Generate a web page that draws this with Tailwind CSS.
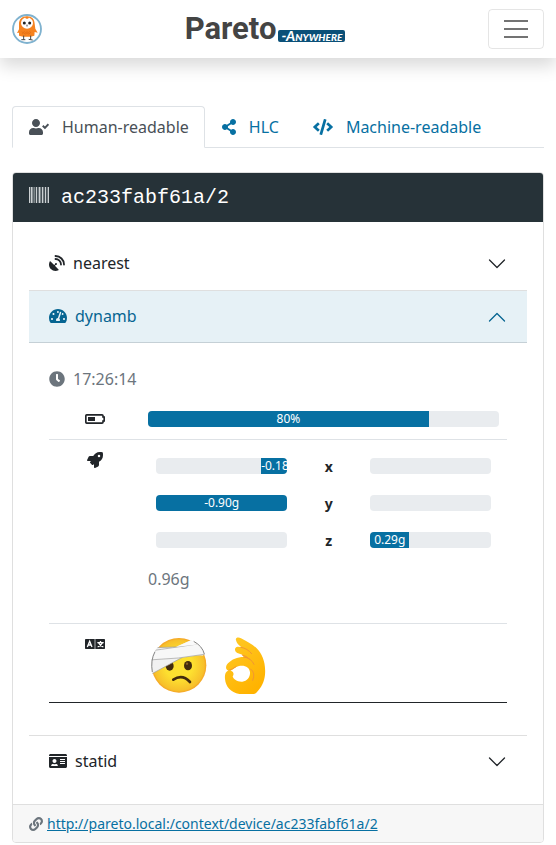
<!DOCTYPE html>
<html lang="en">
<head>
<meta charset="utf-8">
<meta name="viewport" content="width=device-width, initial-scale=1">
<title>Pareto Anywhere</title>
<script src="https://cdn.jsdelivr.net/npm/@tailwindcss/browser@4"></script>
</head>
<body class="bg-white font-['Noto_Sans',sans-serif] text-base leading-6 text-[#212529]">
<header class="flex items-center justify-between bg-white px-3 py-[9px] shadow-[0_8px_16px_rgba(0,0,0,0.15)]">
  <a href="#" aria-label="Home">
    <svg class="size-[30px]" viewBox="0 0 90 90" aria-hidden="true">
      <circle cx="45" cy="45" r="42" fill="#fff" stroke="#7fb2cf" stroke-width="5.500"/>
      <path d="M45 7C29 7 21 17 21 30L21 46L15 57L21 56L21 65Q45 72 67 65L68 54L77 56L70 44L68 29C67 16 60 7 45 7Z" fill="#f5821f"/>
      <ellipse cx="45" cy="27" rx="18" ry="17" fill="#fff"/>
      <path d="M38 11Q45 6 52 11L45 15Z" fill="#f5821f"/>
      <circle cx="37" cy="27" r="4.500" fill="#222"/><circle cx="53" cy="27" r="4.500" fill="#222"/>
      <path d="M42 32L48 32L45 40Z" fill="#777"/>
      <path d="M29 53l4 3 4-3 4 3 4-3 4 3 4-3 4 3M30 60l5-3 5 3 5-3 5 3 5-3" fill="none" stroke="#d9650f" stroke-width="1.500"/>
      <path d="M35 65V77M28 77H40M56 65V76M50 76L62 78" fill="none" stroke="#444" stroke-width="3"/>
    </svg>
  </a>
  <a href="#" class="flex items-end">
    <span class="font-['Roboto',sans-serif] text-[31px] leading-[30px] font-bold text-[#444]">Pareto</span>
    <span class="ml-[2px] mb-[2px] rounded-[2px] bg-[#0b5078] px-[3px] font-['Lato',sans-serif] text-[14px] leading-[12px] font-black text-white italic [font-variant-caps:small-caps]">-Anywhere</span>
  </a>
  <button type="button" aria-label="Toggle navigation" class="flex h-10 w-14 items-center justify-center rounded border border-black/10">
    <svg class="size-[30px]" viewBox="0 0 30 30" fill="none" stroke="#737373" stroke-width="2" aria-hidden="true"><path d="M3 7H27M3 15H27M3 23H27"/></svg>
  </button>
</header>

<main class="px-3 pt-12">
  <nav class="flex border-b border-[#dee2e6] text-[#0770a2]">
    <a href="#" aria-current="page" class="-mb-px flex items-center gap-[13px] rounded-t border border-[#dee2e6] border-b-white bg-white py-2 pr-[15px] pl-4 text-[#495057]">
      <svg class="h-4 w-5" viewBox="0 0 640 512" fill="currentColor" aria-hidden="true"><path d="M224 256c70.700 0 128-57.300 128-128S294.700 0 224 0 96 57.300 96 128s57.300 128 128 128zm89.600 32h-16.700c-22.200 10.200-46.900 16-72.900 16s-50.600-5.800-72.900-16h-16.700C60.200 288 0 348.200 0 422.400V464c0 26.500 21.500 48 48 48h352c26.500 0 48-21.500 48-48v-41.600c0-74.200-60.200-134.400-134.400-134.400z"/><path d="M440 215L510 285L622 165" fill="none" stroke="currentColor" stroke-width="62"/></svg>
      Human-readable</a>
    <a href="#" class="-mb-px flex items-center gap-[13px] border border-transparent py-2 pr-4 pl-4">
      <svg class="h-4 w-[14px]" viewBox="0 0 448 512" fill="currentColor" aria-hidden="true"><path d="M352 320c-22.608 0-43.387 7.819-59.790 20.895l-102.486-64.054a96.551 96.551 0 0 0 0-41.683l102.486-64.054C308.613 184.181 329.392 192 352 192c53.019 0 96-42.981 96-96S405.019 0 352 0s-96 42.981-96 96c0 7.158.790 14.130 2.276 20.841L155.790 180.895C139.387 167.819 118.608 160 96 160c-53.019 0-96 42.981-96 96s42.981 96 96 96c22.608 0 43.387-7.819 59.790-20.895l102.486 64.054A96.301 96.301 0 0 0 256 416c0 53.019 42.981 96 96 96s96-42.981 96-96-42.981-96-96-96z"/></svg>
      HLC</a>
    <a href="#" class="-mb-px flex items-center gap-[13px] border border-transparent py-2 pr-4 pl-4">
      <svg class="h-4 w-5" viewBox="0 0 640 512" fill="currentColor" aria-hidden="true"><path d="M278.900 511.500l-61-17.700c-6.400-1.800-10-8.500-8.200-14.900L346.200 8.700c1.800-6.400 8.500-10 14.900-8.200l61 17.700c6.400 1.800 10 8.500 8.200 14.900L293.800 503.300c-1.900 6.400-8.500 10.100-14.900 8.200zm-114-112.200l43.500-46.400c4.600-4.900 4.300-12.700-.8-17.200L117 256l90.600-79.700c5.100-4.500 5.500-12.300.8-17.200l-43.500-46.400c-4.500-4.800-12.100-5.100-17-.5L3.800 247.200c-5.100 4.700-5.100 12.800 0 17.500l144.100 135.100c4.900 4.600 12.500 4.400 17-.5zm327.200.6l144.100-135.100c5.100-4.700 5.100-12.800 0-17.500L492.100 112.100c-4.800-4.500-12.400-4.300-17 .5L431.600 159c-4.600 4.900-4.300 12.700.8 17.200L523 256l-90.600 79.700c-5.100 4.500-5.500 12.300-.8 17.200l43.500 46.400c4.500 4.900 12.100 5.100 17 .6z"/></svg>
      Machine-readable</a>
  </nav>

  <article class="mt-6 overflow-hidden rounded border border-[#dfdfdf]">
    <h1 class="flex items-center gap-3 border-b border-[#263238] bg-[#263238] px-4 pt-[13px] pb-[11px] font-['Liberation_Mono',monospace] text-xl leading-6 text-white">
      <svg class="mb-1.5 h-4 w-5" viewBox="0 0 60 48" aria-hidden="true"><path d="M0 0H3V48H0ZM5 0H9V48H5ZM14 0H16V48H14ZM21 0H24V48H21ZM30 0H34V48H30ZM39 0H42V48H39ZM48 0H51V48H48ZM57 0H60V48H57Z" fill="#cbd0d2"/><path d="M9 0H12V48H9ZM16 0H19V48H16ZM26 0H29V48H26ZM34 0H37V48H34ZM43 0H46V48H43ZM53 0H56V48H53Z" fill="#889094"/></svg>
      ac233fabf61a/2
    </h1>

    <div class="p-4">
      <section class="border-b border-[#dfdfdf]">
        <button type="button" aria-expanded="false" class="flex h-[52px] w-full items-center px-5 pb-[2px] text-left">
          <svg class="mr-2 size-4" viewBox="0 0 512 512" fill="currentColor" aria-hidden="true"><path d="M305.450 462.590c7.390 7.300 6.170 20.100-3 25-77.710 41.800-176.720 29.900-242.340-35.700C-5.540 386.280-17.400 287.280 24.380 209.580c4.860-9.200 17.660-10.400 25-3L166.280 323.480l27.390-27.390c-.680-2.600-1.800-5-1.800-7.900a32 32 0 1 1 32 32c-2.900 0-5.300-1.100-7.900-1.800l-27.400 27.400Z"/><path d="M208 32A272 272 0 0 1 480 304M208 128A176 176 0 0 1 384 304" fill="none" stroke="currentColor" stroke-width="58" stroke-linecap="round"/></svg>
          <span class="flex-1">nearest</span>
          <svg class="mt-[2px] size-5" viewBox="0 0 20 20" fill="none" stroke="currentColor" stroke-width="1.300" stroke-linecap="round" stroke-linejoin="round" aria-hidden="true"><path d="M2.500 6L10 13.500L17.500 6"/></svg>
        </button>
      </section>

      <section class="border-b border-[#dfdfdf]">
        <button type="button" aria-expanded="true" class="flex h-[52px] w-full items-center border-b border-[#c5d0d6] bg-[#e6f1f6] px-5 pb-[2px] text-left text-[#066592]">
          <svg class="mr-2 h-4 w-[18px]" viewBox="0 0 576 512" fill="currentColor" aria-hidden="true"><path d="M288 32C128.940 32 0 160.940 0 320c0 52.800 14.250 102.260 39.060 144.800 5.610 9.620 16.300 15.200 27.440 15.200h443c11.140 0 21.830-5.580 27.440-15.200C561.750 422.260 576 372.800 576 320c0-159.060-128.940-288-288-288zm0 64c14.710 0 26.580 10.130 30.320 23.650-1.110 2.260-2.640 4.230-3.450 6.670l-9.220 27.670c-5.130 3.490-10.970 6.010-17.640 6.010-17.670 0-32-14.330-32-32S270.330 96 288 96zM96 384c-17.670 0-32-14.330-32-32s14.330-32 32-32 32 14.330 32 32-14.330 32-32 32zm48-160c-17.670 0-32-14.330-32-32s14.330-32 32-32 32 14.330 32 32-14.330 32-32 32zm246.770-72.410l-61.330 184C343.130 347.330 352 364.540 352 384c0 11.720-3.380 22.550-8.880 32H232.880c-5.500-9.450-8.880-20.280-8.880-32 0-33.940 26.500-61.430 59.900-63.590l61.340-184.010c4.170-12.560 17.730-19.450 30.360-15.170 12.570 4.190 19.350 17.790 15.170 30.360zm14.660 57.200l15.520-46.550c3.470-1.290 7.130-2.230 11.050-2.230 17.670 0 32 14.330 32 32s-14.330 32-32 32c-11.380-.010-20.890-6.280-26.570-15.220zM480 384c-17.670 0-32-14.330-32-32s14.330-32 32-32 32 14.330 32 32-14.330 32-32 32z"/></svg>
          <span class="flex-1">dynamb</span>
          <svg class="mt-[2px] size-5" viewBox="0 0 20 20" fill="none" stroke="currentColor" stroke-width="1.300" stroke-linecap="round" stroke-linejoin="round" aria-hidden="true"><path d="M2.500 14L10 6.500L17.500 14"/></svg>
        </button>

        <div class="px-5 py-4">
          <table class="mb-4 w-full table-fixed border-separate border-spacing-0">
            <caption class="py-2 text-left text-[#6c757d]">
              <span class="flex items-center gap-2">
                <svg class="size-4" viewBox="0 0 512 512" fill="currentColor" aria-hidden="true"><path d="M256,8C119,8,8,119,8,256S119,504,256,504,504,393,504,256,393,8,256,8Zm92.490,313h0l-20,25a16,16,0,0,1-22.490,2.500h0l-67-49.720a40,40,0,0,1-15-31.230V112a16,16,0,0,1,16-16h32a16,16,0,0,1,16,16V256l58,42.500A16,16,0,0,1,348.490,321Z"/></svg>
                17:26:14
              </span>
            </caption>
            <tbody>
              <tr>
                <th scope="row" aria-label="Battery" class="w-[91px] border-b border-[#dee2e6] p-2 align-top">
                  <span class="flex h-6 items-center justify-center">
                    <svg class="h-[10px] w-5" viewBox="0 0 60 30" aria-hidden="true"><path d="M5 2.500H51Q54 2.500 54 5V9H57.500V21H54V25Q54 27.500 51 27.500H5Q2.500 27.500 2.500 25V5Q2.500 2.500 5 2.500Z" fill="none" stroke="#212529" stroke-width="5"/><path d="M9 9H30V21H9Z" fill="#212529"/></svg>
                  </span>
                </th>
                <td class="border-b border-[#dee2e6] p-2 align-middle">
                  <div class="flex h-4 overflow-hidden rounded bg-[#e9ecef] text-xs leading-4 text-white">
                    <div class="bg-[#0770a2] text-center" style="width:80%">80%</div>
                  </div>
                </td>
              </tr>
              <tr>
                <th scope="row" aria-label="Acceleration" class="border-b border-[#dee2e6] p-2 align-top">
                  <span class="flex h-6 items-center justify-center">
                    <svg class="size-4" viewBox="0 0 512 512" fill="currentColor" aria-hidden="true"><path d="M505.120 19.094c-1.189-5.531-6.658-11-12.207-12.188C460.716 0 435.507 0 410.407 0 307.175 0 245.269 55.203 199.052 128H94.838c-16.348.016-35.557 11.875-42.887 26.484L2.516 253.297A28.400 28.400 0 0 0 0 264a24.009 24.009 0 0 0 24.006 24H127.816l-22.475 22.469c-11.365 11.361-12.996 32.258 0 45.250L156.246 406.625c11.156 11.188 32.156 13.156 45.277 0l22.475-22.469V488a24.009 24.009 0 0 0 24.006 24 28.559 28.559 0 0 0 10.707-2.516l98.728-49.391c14.629-7.297 26.508-26.500 26.508-42.859V312.797c72.598-46.313 128.035-108.406 128.035-211.094C512.075 76.500 512.075 51.297 505.120 19.094ZM384.040 168A40 40 0 1 1 424.050 128 40.023 40.023 0 0 1 384.040 168Z"/></svg>
                  </span>
                </th>
                <td class="border-b border-[#dee2e6] p-2">
                  <table class="mb-4 w-full table-fixed caption-bottom text-sm leading-[21px]">
                    <caption class="py-2 text-left text-base leading-6 text-[#6c757d]">0.96g</caption>
                    <tbody>
                      <tr>
                        <td class="w-[42%] px-2 pt-2 pb-[9px]"><div class="flex h-4 justify-end overflow-hidden rounded bg-[#e9ecef] text-xs leading-4 text-white"><div class="overflow-hidden bg-[#0770a2] text-center whitespace-nowrap" style="width:20%">-0.18g</div></div></td>
                        <th scope="row" class="w-[19%] p-2 text-center font-bold">x</th>
                        <td class="w-[39%] px-2 pt-2 pb-[9px]"><div class="h-4 rounded bg-[#e9ecef]"></div></td>
                      </tr>
                      <tr>
                        <td class="px-2 pt-2 pb-[9px]"><div class="flex h-4 justify-end overflow-hidden rounded bg-[#e9ecef] text-xs leading-4 text-white"><div class="bg-[#0770a2] text-center" style="width:100%">-0.90g</div></div></td>
                        <th scope="row" class="p-2 text-center font-bold">y</th>
                        <td class="px-2 pt-2 pb-[9px]"><div class="h-4 rounded bg-[#e9ecef]"></div></td>
                      </tr>
                      <tr>
                        <td class="px-2 pt-2 pb-[9px]"><div class="h-4 rounded bg-[#e9ecef]"></div></td>
                        <th scope="row" class="p-2 text-center font-bold">z</th>
                        <td class="px-2 pt-2 pb-[9px]"><div class="flex h-4 overflow-hidden rounded bg-[#e9ecef] text-xs leading-4 text-white"><div class="bg-[#0770a2] text-center" style="width:32.500%">0.29g</div></div></td>
                      </tr>
                    </tbody>
                  </table>
                </td>
              </tr>
              <tr>
                <th scope="row" aria-label="Unicode" class="border-b border-[#212529] p-2 align-top">
                  <span class="flex h-6 items-center justify-center">
                    <svg class="h-[10px] w-5" viewBox="0 0 60 30" aria-hidden="true"><rect width="60" height="30" rx="2" fill="#212529"/><path d="M28 0H32V30H28Z" fill="#8b8e91"/><path d="M7 24L14 7L21 24M10 18H18" fill="none" stroke="#fff" stroke-width="4"/><path d="M37 11H56M46.500 6V11M52 12Q48 20 38 24M41 12Q45 20 55 24" fill="none" stroke="#fff" stroke-width="4"/></svg>
                  </span>
                </th>
                <td class="border-b border-[#212529] p-2">
                  <div class="flex h-[62px] items-end gap-[14px] pl-px">
                    <svg class="h-[58px] w-[60px]" viewBox="240 47 180 174" role="img" aria-label="Face with head bandage">
                      <defs>
                        <radialGradient id="skin" cx="50%" cy="50%" r="50%"><stop offset="0.500" stop-color="#fde030"/><stop offset="0.920" stop-color="#f7c02b"/><stop offset="1" stop-color="#f4a223"/></radialGradient>
                        <clipPath id="head"><circle cx="330" cy="135" r="84"/></clipPath>
                      </defs>
                      <circle cx="330" cy="135" r="82" fill="url(#skin)"/>
                      <ellipse cx="302" cy="137" rx="12" ry="14" fill="#422b0d"/><ellipse cx="357" cy="136" rx="12" ry="14" fill="#422b0d"/>
                      <circle cx="299" cy="131" r="3.500" fill="#896024"/><circle cx="354" cy="130" r="3.500" fill="#896024"/>
                      <path d="M313 178Q340 160 363 185" fill="none" stroke="#422b0d" stroke-width="8" stroke-linecap="round"/>
                      <g clip-path="url(#head)" stroke="#9b9b9b" stroke-width="2">
                        <path d="M322 79L367 59L407 96L402 106L318 97Z" fill="#e8e8e8" stroke="none"/>
                        <path d="M240 165L342 110L320 80L258 82L240 110Z" fill="#f1f1f1"/>
                        <path d="M249 91Q300 84 392 70L412 101Q330 116 240 119Z" fill="#f7f7f7"/>
                        <path d="M322 79L366 60L393 72Z" fill="#fafafa" stroke="none"/>
                      </g>
                      <path d="M258 94Q244 120 250 155M374 63Q400 77 406 101" fill="none" stroke="#858585" stroke-width="3"/>
                    </svg>
                    <svg class="h-[58px] w-[45px]" viewBox="459 47 135 174" role="img" aria-label="OK hand">
                      <defs><linearGradient id="hand" x1="0" y1="0" x2="0.600" y2="1"><stop offset="0" stop-color="#ffca28"/><stop offset="1" stop-color="#ffb300"/></linearGradient></defs>
                      <path fill-rule="evenodd" d="M498 60C495 51 506 49 513 54C531 63 547 72 560 84C577 101 588 128 585 163C583 184 574 202 559 217Q556 221 550 221H508C482 216 467 199 465 176C463 156 472 148 482 151C491 153 493 162 488 168C491 178 502 185 517 184C532 182 541 170 540 156C538 141 526 134 507 137C495 139 489 150 479 151C466 151 465 138 474 129C485 117 502 110 521 110L517 103L502 98C492 94 493 79 503 79L514 80Q501 72 498 60Z" fill="url(#hand)"/>
                      <path d="M513 81Q532 84 545 100M517 104Q531 107 539 117M477 150Q488 146 498 139M521 110Q544 113 552 132M542 146Q558 158 548 180" fill="none" stroke="#f19534" stroke-width="3" stroke-linecap="round"/>
                    </svg>
                  </div>
                </td>
              </tr>
            </tbody>
          </table>
        </div>
      </section>

      <section>
        <button type="button" aria-expanded="false" class="flex h-[52px] w-full items-center px-5 pb-[2px] text-left">
          <svg class="mr-2 h-4 w-[18px]" viewBox="0 0 576 512" fill="currentColor" aria-hidden="true"><path d="M528 32H48C21.500 32 0 53.500 0 80v16h576V80c0-26.500-21.500-48-48-48zM0 432c0 26.500 21.500 48 48 48h480c26.500 0 48-21.500 48-48V128H0v304zm352-232c0-4.400 3.600-8 8-8h144c4.400 0 8 3.600 8 8v16c0 4.400-3.600 8-8 8H360c-4.400 0-8-3.600-8-8v-16zm0 64c0-4.400 3.600-8 8-8h144c4.400 0 8 3.600 8 8v16c0 4.400-3.600 8-8 8H360c-4.400 0-8-3.600-8-8v-16zm0 64c0-4.400 3.600-8 8-8h144c4.400 0 8 3.600 8 8v16c0 4.400-3.600 8-8 8H360c-4.400 0-8-3.600-8-8v-16zM176 192c35.300 0 64 28.700 64 64s-28.700 64-64 64-64-28.700-64-64 28.700-64 64-64zM67.100 396.200C75.500 370.500 99.600 352 128 352h8.200c12.300 5.100 25.700 8 39.800 8s27.600-2.900 39.800-8h8.200c28.400 0 52.500 18.500 60.900 44.200 3.200 9.900-5.200 19.800-15.600 19.800H82.700c-10.400 0-18.800-10-15.600-19.800z"/></svg>
          <span class="flex-1">statid</span>
          <svg class="mt-[2px] size-5" viewBox="0 0 20 20" fill="none" stroke="currentColor" stroke-width="1.300" stroke-linecap="round" stroke-linejoin="round" aria-hidden="true"><path d="M2.500 6L10 13.500L17.500 6"/></svg>
        </button>
      </section>
    </div>

    <footer class="flex items-center gap-1 border-t border-[#dfdfdf] bg-[#f7f7f7] px-4 py-2 text-sm leading-[21px]">
      <svg class="size-[14px] text-[#6c757d]" viewBox="0 0 512 512" fill="currentColor" aria-hidden="true"><path d="M326.612 185.391c59.747 59.809 58.927 155.698.360 214.590-.110.120-.240.250-.360.370l-67.200 67.200c-59.270 59.270-155.699 59.262-214.960 0-59.270-59.260-59.270-155.700 0-214.960l37.106-37.106c9.840-9.840 26.786-3.300 27.294 10.606.648 17.722 3.826 35.527 9.690 52.721 1.986 5.822.567 12.262-3.783 16.612l-13.087 13.087c-28.026 28.026-28.905 73.660-1.155 101.960 28.024 28.579 74.086 28.749 102.325.510l67.200-67.190c28.191-28.191 28.073-73.757 0-101.830-3.701-3.694-7.429-6.564-10.341-8.569a16.037 16.037 0 0 1-6.947-12.606c-.396-10.567 3.348-21.456 11.698-29.806l21.054-21.055c5.521-5.521 14.182-6.199 20.584-1.731a152.482 152.482 0 0 1 20.522 17.197zM467.547 44.449c-59.261-59.262-155.690-59.270-214.960 0l-67.200 67.200c-.120.120-.250.250-.360.370-58.566 58.892-59.387 154.781.360 214.590a152.454 152.454 0 0 0 20.521 17.196c6.402 4.468 15.064 3.789 20.584-1.731l21.054-21.055c8.350-8.350 12.094-19.239 11.698-29.806a16.037 16.037 0 0 0-6.947-12.606c-2.912-2.005-6.640-4.875-10.341-8.569-28.073-28.073-28.191-73.639 0-101.830l67.200-67.190c28.239-28.239 74.300-28.069 102.325.510 27.750 28.300 26.872 73.934-1.155 101.960l-13.087 13.087c-4.350 4.350-5.769 10.790-3.783 16.612 5.864 17.194 9.042 34.999 9.690 52.721.509 13.906 17.454 20.446 27.294 10.606l37.106-37.106c59.271-59.259 59.271-155.699.001-214.959z"/></svg>
      <a href="http://pareto.local:/context/device/ac233fabf61a/2" class="text-[#0770a2] underline">http://pareto.local:/context/device/ac233fabf61a/2</a>
    </footer>
  </article>
</main>
</body>
</html>
